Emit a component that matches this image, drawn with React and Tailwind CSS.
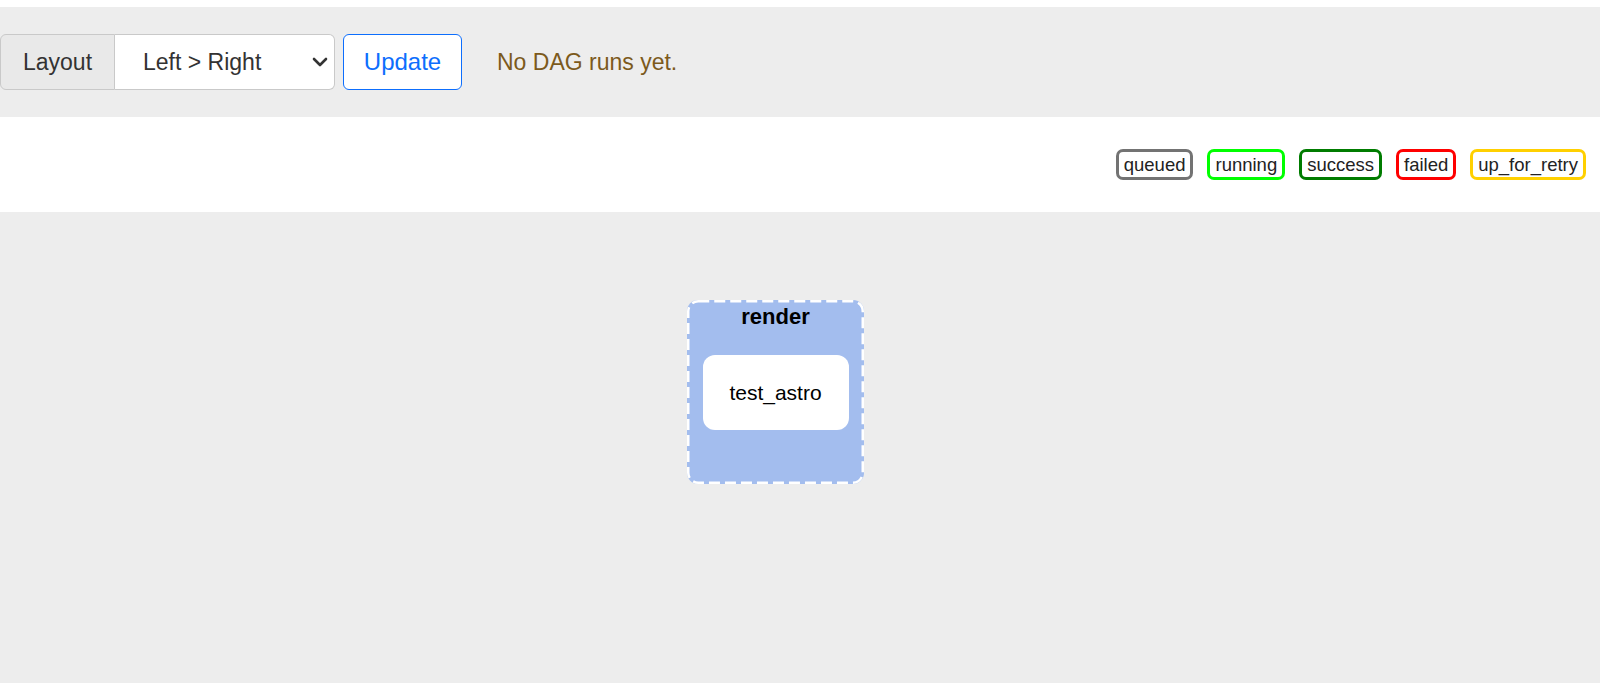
import React from 'react';

const legend = [
    { label: 'queued', border: 'border-[#737373]' },
    { label: 'running', border: 'border-[#00ff00]' },
    { label: 'success', border: 'border-[#007c00]' },
    { label: 'failed', border: 'border-[#ff0000]' },
    { label: 'up_for_retry', border: 'border-[#ffd000]' },
];

export default function App() {
    return (
        <div className="min-h-screen bg-white font-['Liberation_Sans',Arial,sans-serif] pt-[7px]">
            {/* Toolbar */}
            <div className="h-[110px] bg-[#ededed] flex items-center">
                <div className="flex h-[56px]">
                    <div className="w-[115px] flex items-center justify-center bg-[#e9e9e9] border border-[#c9c9c9] rounded-l-[6px] text-[23px] text-[#333]">
                        Layout
                    </div>
                    <div className="relative w-[220px]">
                        <select
                            defaultValue="LR"
                            className="appearance-none w-full h-full bg-white border border-l-0 border-[#c9c9c9] rounded-r-[6px] pl-[28px] text-[23px] text-[#333] outline-none"
                        >
                            <option value="LR">Left &gt; Right</option>
                            <option value="TB">Top &gt; Bottom</option>
                        </select>
                        <svg className="absolute right-[7px] top-[21px] pointer-events-none" width="16" height="14" viewBox="0 0 16 14">
                            <path d="M2 4l6 6 6-6" fill="none" stroke="#333" strokeWidth="2.6" strokeLinecap="round" strokeLinejoin="round" />
                        </svg>
                    </div>
                </div>
                <button className="ml-[8px] w-[119px] h-[56px] border-[1.5px] border-[#0d6efd] rounded-[6px] bg-white text-[24px] text-[#0d6efd]">
                    Update
                </button>
                <p className="ml-[35px] text-[23px] text-[#7c5a1c]">No DAG runs yet.</p>
            </div>

            {/* Legend */}
            <div className="h-[95px] flex items-center justify-end gap-[14px] pr-[14px]">
                {legend.map((item) => (
                    <span
                        key={item.label}
                        className={`h-[31px] flex items-center px-[5px] border-[3px] rounded-[7px] text-[18.5px] text-[#222] ${item.border}`}
                    >
                        {item.label}
                    </span>
                ))}
            </div>

            {/* Graph canvas */}
            <div className="h-[471px] bg-[#ededed] pt-[88px] pl-[687px]">
                <div className="relative w-[177px] h-[184px] bg-[#a3bdee] rounded-[11px] flex flex-col items-center">
                    <svg className="absolute inset-0 pointer-events-none" width="177" height="184" viewBox="0 0 177 184">
                        <rect x="1.25" y="1.25" width="174.5" height="181.5" rx="10" fill="none" stroke="#ffffff" strokeWidth="2.5" strokeDasharray="11 5" />
                    </svg>
                    <div className="mt-0 text-[22px] font-bold text-black">render</div>
                    <div className="mt-[22px] w-[146px] h-[75px] bg-white rounded-[12px] flex items-center justify-center text-[21px] text-black">
                        test_astro
                    </div>
                </div>
            </div>
        </div>
    );
}
